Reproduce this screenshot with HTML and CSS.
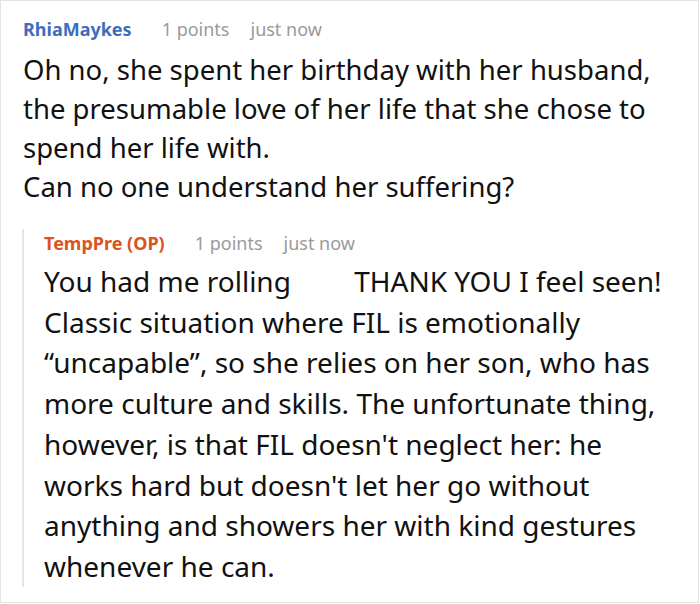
FILE: index.html
```html
<!DOCTYPE html>
<html>
<head>
<meta charset="utf-8">
<link rel="stylesheet" href="styles.css">
</head>
<body>
<div class="frame">
  <div class="comment">
    <div class="meta">
      <span class="user">RhiaMaykes</span>
      <span class="info points">1 points</span>
      <span class="info">just now</span>
    </div>
    <div class="body">
      <p>Oh no, she spent her birthday with her husband, the presumable love of her life that she chose to spend her life with.</p>
      <p>Can no one understand her suffering?</p>
    </div>
    <div class="reply">
      <div class="meta">
        <span class="user op">TempPre (OP)</span>
        <span class="info points">1 points</span>
        <span class="info">just now</span>
      </div>
      <div class="body reply-body">
        <p>You had me rolling <span class="after-emoji">THANK YOU I feel seen!</span> Classic situation where FIL is emotionally “uncapable”, so she relies on her son, who has more culture and skills. The unfortunate thing, however, is that FIL doesn't neglect her: he<br>works hard but doesn't let her go without anything and showers her with kind gestures whenever he can.</p>
      </div>
    </div>
  </div>
</div>
</body>
</html>
```
FILE: styles.css
```css
html, body {
  margin: 0;
  padding: 0;
  background: #ffffff;
}
body {
  font-family: "Noto Sans", "Open Sans", sans-serif;
}
.frame {
  width: 697px;
  height: 601px;
  border: 1px solid #e4e4e4;
  background: #fff;
  overflow: hidden;
}
.comment {
  padding: 14px 0 0 22px;
}
.meta {
  display: flex;
  align-items: baseline;
  font-size: 18px;
  line-height: 28px;
  margin-bottom: 7px;
}
.user {
  font-weight: 700;
  color: #3d6dbd;
}
.user.op {
  color: #d9541e;
}
.info {
  color: #9a9a9a;
  margin-left: 21px;
}
.info.points {
  margin-left: 30px;
}
.body {
  font-size: 27.5px;
  line-height: 39px;
  color: #111;
  width: 640px;
}
.body p {
  margin: 0;
}
.reply {
  margin-top: 23px;
  margin-left: -1px;
  border-left: 2px solid #e6e6e6;
  padding-left: 20px;
}
.reply .meta {
  margin-bottom: 4px;
}
.reply-body {
  font-size: 28px;
  line-height: 40.7px;
  width: 652px;
}
.after-emoji {
  margin-left: 56px;
}
```
